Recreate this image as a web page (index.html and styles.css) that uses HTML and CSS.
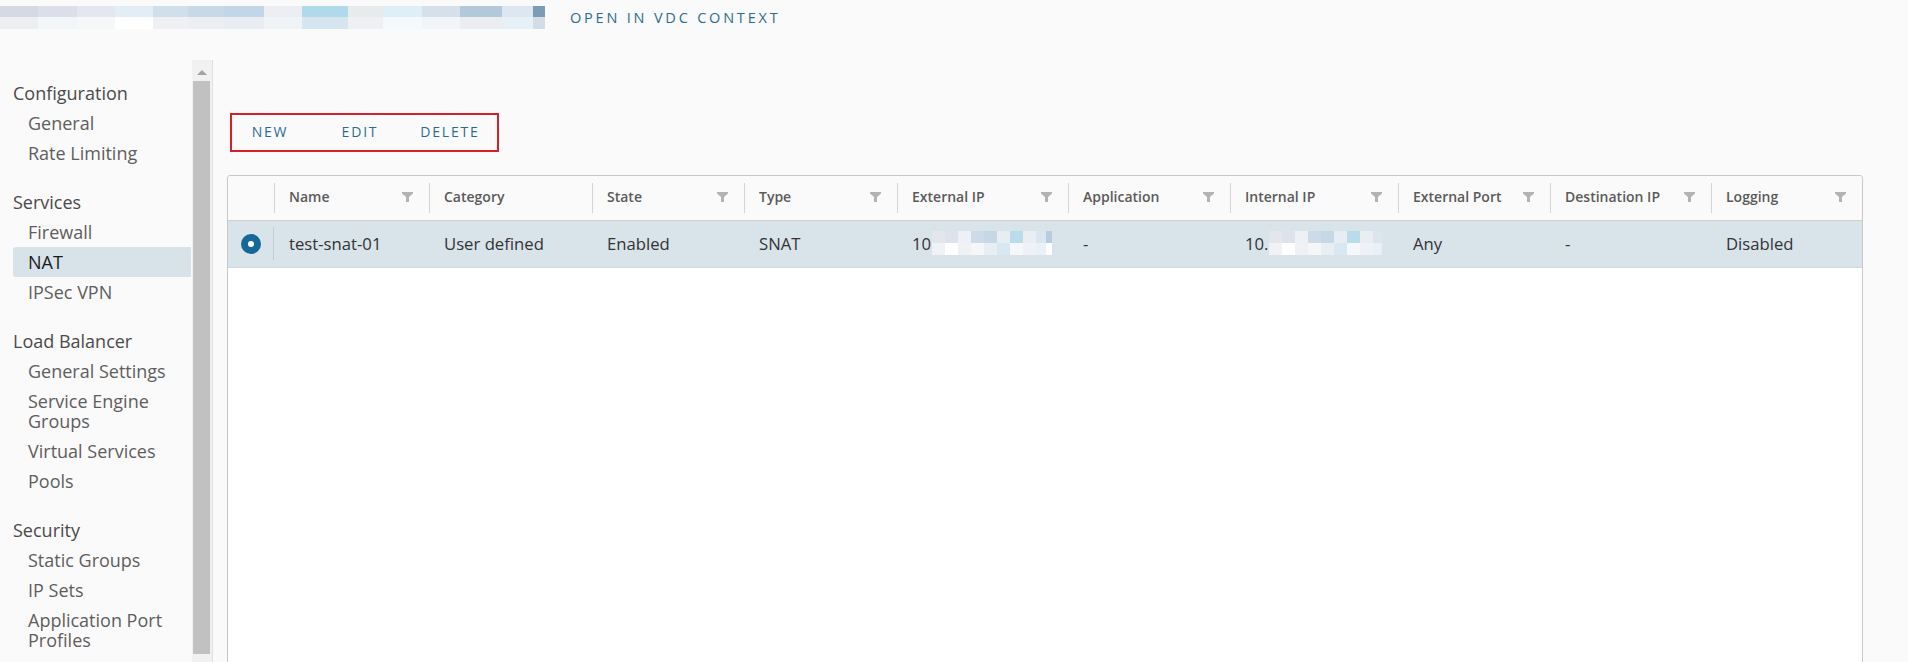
FILE: index.html
```html
<!DOCTYPE html>
<html lang="en">
<head>
<meta charset="utf-8">
<title>NAT</title>
<link rel="stylesheet" href="styles.css">
</head>
<body>
<header class="topbar">
  <div class="blur-title"></div>
  <a class="ctx-link" href="#">OPEN IN VDC CONTEXT</a>
</header>
<div class="main">
  <aside class="sidebar">
    <nav class="nav">
      <div class="nav-section">
        <div class="nav-head">Configuration</div>
        <a class="nav-item" href="#">General</a>
        <a class="nav-item" href="#">Rate Limiting</a>
      </div>
      <div class="nav-section">
        <div class="nav-head">Services</div>
        <a class="nav-item" href="#">Firewall</a>
        <a class="nav-item active" href="#">NAT</a>
        <a class="nav-item" href="#">IPSec VPN</a>
      </div>
      <div class="nav-section">
        <div class="nav-head">Load Balancer</div>
        <a class="nav-item" href="#">General Settings</a>
        <a class="nav-item two" href="#">Service Engine Groups</a>
        <a class="nav-item" href="#">Virtual Services</a>
        <a class="nav-item" href="#">Pools</a>
      </div>
      <div class="nav-section">
        <div class="nav-head">Security</div>
        <a class="nav-item" href="#">Static Groups</a>
        <a class="nav-item" href="#">IP Sets</a>
        <a class="nav-item two" href="#">Application Port Profiles</a>
      </div>
    </nav>
    <div class="scrollbar">
      <div class="sb-arrow"></div>
      <div class="sb-thumb"></div>
    </div>
  </aside>
  <section class="content">
    <div class="toolbar">
      <button class="btn">NEW</button>
      <button class="btn">EDIT</button>
      <button class="btn">DELETE</button>
      <div class="annot"></div>
    </div>
    <div class="datagrid">
      <div class="row head">
        <div class="cell sel"></div>
        <div class="cell">Name<svg class="filter" viewBox="0 0 11 10"><polygon points="0,0 11,0 11,1.5 7,5 7,10 4,10 4,5 0,1.5"/></svg></div>
        <div class="cell">Category</div>
        <div class="cell">State<svg class="filter" viewBox="0 0 11 10"><polygon points="0,0 11,0 11,1.5 7,5 7,10 4,10 4,5 0,1.5"/></svg></div>
        <div class="cell">Type<svg class="filter" viewBox="0 0 11 10"><polygon points="0,0 11,0 11,1.5 7,5 7,10 4,10 4,5 0,1.5"/></svg></div>
        <div class="cell">External IP<svg class="filter" viewBox="0 0 11 10"><polygon points="0,0 11,0 11,1.5 7,5 7,10 4,10 4,5 0,1.5"/></svg></div>
        <div class="cell">Application<svg class="filter" viewBox="0 0 11 10"><polygon points="0,0 11,0 11,1.5 7,5 7,10 4,10 4,5 0,1.5"/></svg></div>
        <div class="cell">Internal IP<svg class="filter" viewBox="0 0 11 10"><polygon points="0,0 11,0 11,1.5 7,5 7,10 4,10 4,5 0,1.5"/></svg></div>
        <div class="cell">External Port<svg class="filter" viewBox="0 0 11 10"><polygon points="0,0 11,0 11,1.5 7,5 7,10 4,10 4,5 0,1.5"/></svg></div>
        <div class="cell">Destination IP<svg class="filter" viewBox="0 0 11 10"><polygon points="0,0 11,0 11,1.5 7,5 7,10 4,10 4,5 0,1.5"/></svg></div>
        <div class="cell">Logging<svg class="filter" viewBox="0 0 11 10"><polygon points="0,0 11,0 11,1.5 7,5 7,10 4,10 4,5 0,1.5"/></svg></div>
      </div>
      <div class="row body selected">
        <div class="cell sel"><span class="radio"></span></div>
        <div class="cell">test-snat-01</div>
        <div class="cell">User defined</div>
        <div class="cell">Enabled</div>
        <div class="cell">SNAT</div>
        <div class="cell">10<span class="blur-ip ext"></span></div>
        <div class="cell">-</div>
        <div class="cell">10.<span class="blur-ip int"></span></div>
        <div class="cell">Any</div>
        <div class="cell">-</div>
        <div class="cell">Disabled</div>
      </div>
    </div>
  </section>
</div>
</body>
</html>
```
FILE: styles.css
```css
* { box-sizing: border-box; }
html, body { margin: 0; padding: 0; }
body {
  background: #fafafa;
  font-family: "Open Sans", "Liberation Sans", sans-serif;
  color: #333;
  width: 1908px;
  height: 662px;
  overflow: hidden;
}

.topbar {
  display: flex;
  align-items: flex-start;
  height: 60px;
}
.blur-title {
  width: 545px;
  height: 23px;
  margin-top: 6px;
  background:
    linear-gradient(to right,
      #d5d9e4 0 38px, #dcdfe9 38px 77px, #e4e7ef 77px 115px, #e3edf5 115px 153px,
      #d0dfea 153px 188px, #c7d8e6 188px 224px, #c2d6e7 224px 264px, #eceef4 264px 302px,
      #b0d9eb 302px 348px, #e8ebec 348px 383px, #deeff8 383px 422px, #d6e0ea 422px 460px,
      #b4c8dc 460px 502px, #dce7f1 502px 533px, #7c9bb6 533px 545px) top / 100% 11px no-repeat,
    linear-gradient(to right,
      #eceef2 0 38px, #f3f6f9 38px 77px, #f6f7f9 77px 115px, #ffffff 115px 153px,
      #eff0f4 153px 188px, #eceef3 188px 224px, #e9ecf2 224px 264px, #f0f3f6 264px 302px,
      #d5e6f1 302px 348px, #eef0f3 348px 383px, #f3f9fc 383px 422px, #f1f4f8 422px 460px,
      #ebedf1 460px 502px, #e5f1f7 502px 533px, #d3dde7 533px 545px) bottom / 100% 12px no-repeat;
}
.ctx-link {
  margin-left: 25px;
  line-height: 36px;
  font-size: 14.5px;
  letter-spacing: 2.8px;
  color: #2b6c92;
  text-decoration: none;
}

.main {
  display: flex;
  height: 602px;
}

.sidebar {
  display: flex;
  width: 213px;
  border-right: 1px solid #e0e0e0;
  flex: none;
}
.nav {
  width: 192px;
  padding: 19px 1px 0 13px;
  display: flex;
  flex-direction: column;
  gap: 20px;
}
.nav-section {
  display: flex;
  flex-direction: column;
}
.nav-head {
  height: 29px;
  line-height: 29px;
  font-size: 18px;
  color: #4a4a4a;
}
.nav-item {
  display: block;
  height: 30px;
  line-height: 30px;
  padding-left: 15px;
  font-size: 18px;
  color: #5e5e5e;
  text-decoration: none;
  border-radius: 3px 0 0 3px;
  white-space: nowrap;
}
.nav-item.two {
  height: 50px;
  line-height: 20px;
  padding-top: 5px;
  padding-right: 10px;
  white-space: normal;
}
.nav-item.active {
  background: #d8e3e9;
  color: #1b1b1b;
}

.scrollbar {
  width: 20px;
  background: #f1f1f1;
  display: flex;
  flex-direction: column;
  align-items: center;
  padding: 10px 2px 0 1px;
}
.sb-arrow {
  width: 0;
  height: 0;
  border-left: 5px solid transparent;
  border-right: 5px solid transparent;
  border-bottom: 5px solid #a3a3a3;
}
.sb-thumb {
  align-self: stretch;
  margin-top: 6px;
  height: 573px;
  background: #c1c1c1;
}

.content {
  flex: 1;
  padding-left: 12px;
  display: flex;
  flex-direction: column;
}
.toolbar {
  position: relative;
  display: flex;
  margin-top: 53px;
  height: 36px;
}
.btn {
  width: 90px;
  height: 36px;
  border: none;
  background: transparent;
  font-family: "Open Sans", "Liberation Sans", sans-serif;
  font-size: 14px;
  letter-spacing: 1.8px;
  color: #2b6c92;
  padding: 0;
}
.annot {
  position: absolute;
  left: 5px;
  top: 0;
  width: 269px;
  height: 39px;
  border: 2px solid #d3202b;
  pointer-events: none;
}

.datagrid {
  margin-top: 26px;
  margin-left: 2px;
  width: 1636px;
  height: 520px;
  flex: none;
  background: #fff;
  border: 1px solid #c8c8c8;
  border-radius: 3px;
}
.row {
  display: grid;
  grid-template-columns: 46px 155px 163px 152px 153px 171px 162px 168px 152px 161px 1fr;
}
.row.head {
  height: 45px;
  background: #fafafa;
  border-bottom: 1px solid #cfcfcf;
  border-radius: 3px 3px 0 0;
}
.row.body {
  height: 47px;
  border-bottom: 1px solid #d2d9de;
}
.row.selected { background: #d9e3ea; }

.cell {
  position: relative;
  display: flex;
  align-items: center;
  justify-content: space-between;
  padding: 0 16px 0 15px;
  white-space: nowrap;
}
.head .cell {
  font-size: 14px;
  font-weight: 600;
  color: #5a5a5a;
  padding-bottom: 3px;
}
.body .cell {
  font-size: 16.7px;
  color: #333;
  justify-content: flex-start;
  padding-bottom: 2px;
}
.head .cell + .cell::before {
  content: "";
  position: absolute;
  left: 0;
  top: 7px;
  bottom: 7px;
  width: 1px;
  background: #d4d4d4;
}
.cell.sel {
  padding: 0;
  justify-content: center;
}
.body .cell.sel::after {
  content: "";
  position: absolute;
  right: 0;
  top: 6px;
  bottom: 7px;
  width: 1px;
  background: #c3ccd2;
}
.body .cell.sel { justify-content: center; padding: 0; }
.filter {
  width: 11px;
  height: 10px;
  fill: #b3b3b3;
  flex: none;
}
.radio {
  width: 20px;
  height: 20px;
  border-radius: 50%;
  background: #16679a;
  display: flex;
  align-items: center;
  justify-content: center;
}
.radio::after {
  content: "";
  width: 6px;
  height: 6px;
  border-radius: 50%;
  background: #fff;
}
.blur-ip {
  display: inline-block;
  height: 24px;
  margin-left: 1px;
  background:
    linear-gradient(to right,
      #e4e6ee 0 13px, #dde3ec 13px 26px, #edf1f6 26px 39px, #ccdbe7 39px 52px,
      #c6d8e6 52px 65px, #e8edf3 65px 78px, #b9dced 78px 91px, #e9eef3 91px 104px,
      #dbe5ef 104px 114px, #b8cce0 114px 125px, #ffffff 125px 127px, #7e9cb8 127px 129px) top / 100% 12px no-repeat,
    linear-gradient(to right,
      #f1f2f6 0 13px, #ffffff 13px 26px, #f0f1f5 26px 39px, #f4f6f8 39px 52px,
      #e9eef4 52px 65px, #d8e8f3 65px 78px, #f4f8fb 78px 91px, #eef1f5 91px 104px,
      #e9f1f7 104px 114px, #ffffff 114px 127px, #c9d6e3 127px 129px) bottom / 100% 12px no-repeat;
}
.blur-ip.ext { width: 131px; }
.blur-ip.int { width: 131px; }
```
